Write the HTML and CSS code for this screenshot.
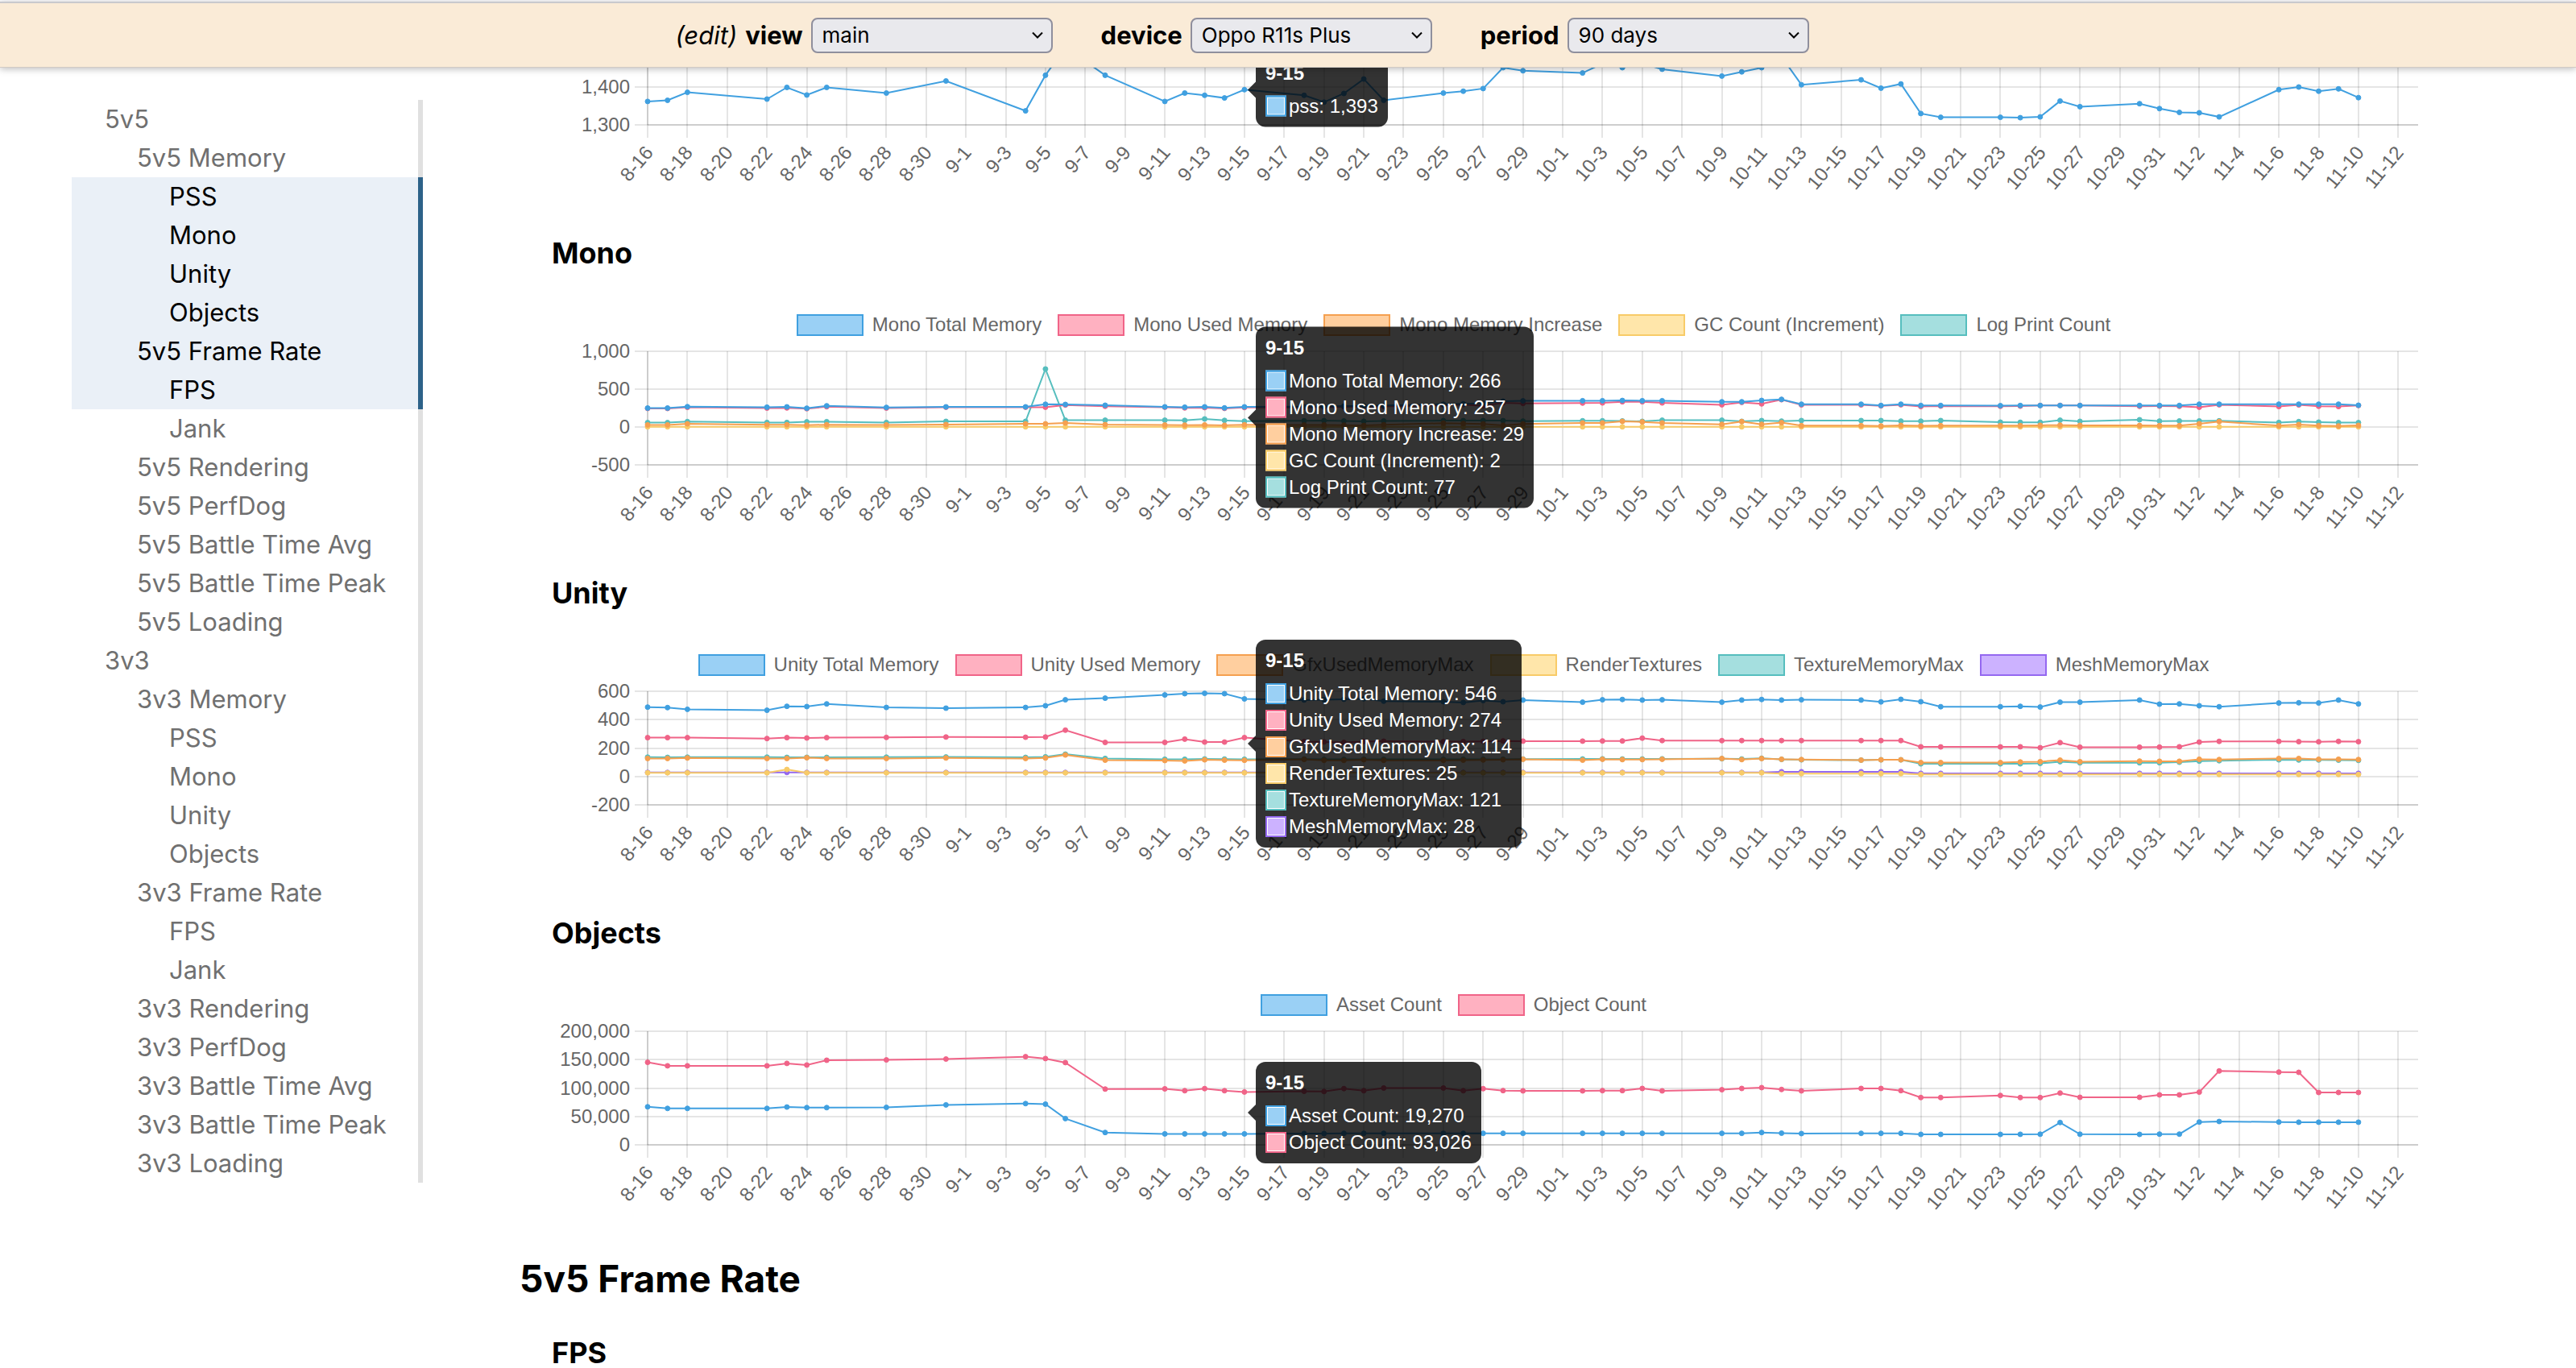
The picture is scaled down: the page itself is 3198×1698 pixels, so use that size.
FILE: index.html
```html
<!DOCTYPE html>
<html lang="en">
<head>
<meta charset="utf-8">
<title>Performance dashboard</title>
<link rel="stylesheet" href="styles.css">
</head>
<body>
<div class="page">
  <header class="toolbar">
    <div class="field">
      <a class="edit" href="#edit">(edit)</a>
      <label for="view">view</label>
      <span class="picker">
        <select id="view"><option>main</option></select>
        <svg class="chevron" viewBox="0 0 16 10" aria-hidden="true"><path d="M2 1.500l6 6 6-6"/></svg>
      </span>
    </div>
    <div class="field">
      <label for="device">device</label>
      <span class="picker">
        <select id="device"><option>Oppo R11s Plus</option></select>
        <svg class="chevron" viewBox="0 0 16 10" aria-hidden="true"><path d="M2 1.500l6 6 6-6"/></svg>
      </span>
    </div>
    <div class="field">
      <label for="period">period</label>
      <span class="picker">
        <select id="period"><option>90 days</option></select>
        <svg class="chevron" viewBox="0 0 16 10" aria-hidden="true"><path d="M2 1.500l6 6 6-6"/></svg>
      </span>
    </div>
  </header>
  <div class="body">
    <nav class="toc" aria-label="Contents">
      <a class="l1" href="#s5">5v5</a>
      <a class="l2" href="#s5-memory">5v5 Memory</a>
      <a class="l3 active" href="#pss">PSS</a>
      <a class="l3 active" href="#mono">Mono</a>
      <a class="l3 active" href="#unity">Unity</a>
      <a class="l3 active" href="#objects">Objects</a>
      <a class="l2 active" href="#frame-rate">5v5 Frame Rate</a>
      <a class="l3 active" href="#fps">FPS</a>
      <a class="l3" href="#s5-jank">Jank</a>
      <a class="l2" href="#s5-rendering">5v5 Rendering</a>
      <a class="l2" href="#s5-perfdog">5v5 PerfDog</a>
      <a class="l2" href="#s5-avg">5v5 Battle Time Avg</a>
      <a class="l2" href="#s5-peak">5v5 Battle Time Peak</a>
      <a class="l2" href="#s5-loading">5v5 Loading</a>
      <a class="l1" href="#s3">3v3</a>
      <a class="l2" href="#s3-memory">3v3 Memory</a>
      <a class="l3" href="#s3-pss">PSS</a>
      <a class="l3" href="#s3-mono">Mono</a>
      <a class="l3" href="#s3-unity">Unity</a>
      <a class="l3" href="#s3-objects">Objects</a>
      <a class="l2" href="#s3-frame-rate">3v3 Frame Rate</a>
      <a class="l3" href="#s3-fps">FPS</a>
      <a class="l3" href="#s3-jank">Jank</a>
      <a class="l2" href="#s3-rendering">3v3 Rendering</a>
      <a class="l2" href="#s3-perfdog">3v3 PerfDog</a>
      <a class="l2" href="#s3-avg">3v3 Battle Time Avg</a>
      <a class="l2" href="#s3-peak">3v3 Battle Time Peak</a>
      <a class="l2" href="#s3-loading">3v3 Loading</a>
    </nav>
    <main class="content" id="content">
      <h2 id="s5-memory">5v5 Memory</h2>
      <section id="pss"><h3>PSS</h3><div class="chart" data-chart="pss"></div></section>
      <section id="mono"><h3>Mono</h3><div class="chart" data-chart="mono"></div></section>
      <section id="unity"><h3>Unity</h3><div class="chart" data-chart="unity"></div></section>
      <section id="objects"><h3>Objects</h3><div class="chart" data-chart="objects"></div></section>
      <h2 id="frame-rate">5v5 Frame Rate</h2>
      <section id="fps"><h3>FPS</h3></section>
    </main>
  </div>
</div>
<script src="charts.js"></script>
</body>
</html>
```
FILE: styles.css
```css
* { box-sizing: border-box; }
body {
  margin: 0;
  background: #fff;
  color: #000;
  font-family: Inter, "Liberation Sans", sans-serif;
}
a { color: inherit; text-decoration: none; }
.page {
  display: flex;
  flex-direction: column;
  height: 100vh;
  border-top: 2px solid #f9f9fb;
}
.toolbar {
  position: relative;
  z-index: 2;
  flex: none;
  display: flex;
  justify-content: center;
  align-items: center;
  gap: 60px;
  height: 82px;
  padding-right: 114px;
  border-top: 2px solid #c9c9cd;
  border-bottom: 1px solid #d2cbc4;
  background: #faebd7;
  box-shadow: 0 2px 8px rgba(0, 0, 0, 0.25);
  font-size: 31px;
}
.field { display: flex; align-items: center; gap: 10px; }
.field label { font-weight: 700; }
.edit { font-style: italic; }
.picker { position: relative; display: flex; }
.picker select {
  appearance: none;
  width: 300px;
  height: 44px;
  padding: 0 12px;
  border: 2px solid #8f8f9d;
  border-radius: 8px;
  background: #e9e9ed;
  color: #000;
  font: 26px Inter, "Liberation Sans", sans-serif;
}
.chevron {
  position: absolute;
  right: 11px;
  top: 17px;
  width: 16px;
  height: 10px;
  fill: none;
  stroke: #000;
  stroke-width: 2;
  pointer-events: none;
}
.body { flex: 1; display: flex; min-height: 0; }
.toc {
  flex: none;
  width: 525px;
  padding: 40px 0 0 89px;
}
.toc a {
  display: block;
  border-right: 6px solid #e0e0e0;
  color: #707070;
  font-size: 31px;
  line-height: 48px;
}
.toc .l1 { padding-left: 41px; }
.toc .l2 { padding-left: 81px; }
.toc .l3 { padding-left: 121px; }
.toc .active {
  border-color: #2d6289;
  background: #eaf0f7;
  color: #000;
}
.content {
  flex: 1;
  min-width: 0;
  overflow-y: auto;
  scrollbar-width: none;
  padding: 0 196px 120px 120px;
}
h2 { margin: 0 0 41px; font-size: 46px; line-height: 58px; }
h3 { margin: 0; font-size: 36px; line-height: 44px; }
section { padding-left: 40px; }
.chart {
  position: relative;
  height: 378px;
  padding-top: 51px;
  font-family: "Liberation Sans", Arial, sans-serif;
  font-size: 24px;
}
.legend {
  display: flex;
  justify-content: center;
  gap: 20px;
  margin: 0 0 0 -78px;
  padding: 0;
  list-style: none;
  color: #666;
  line-height: 32px;
}
.legend li { display: flex; align-items: center; gap: 11px; }
.legend i {
  width: 83px;
  height: 27px;
  border-style: solid;
  border-width: 2px;
}
.plot { display: block; width: 100%; height: 250px; overflow: visible; }
.plot text { fill: #666; }
.grid { stroke: rgba(0, 0, 0, 0.1); stroke-width: 2; }
.series { fill: none; stroke-width: 2; }
.tooltip {
  position: absolute;
  transform: translateY(-50%);
  padding: 12px;
  border-radius: 12px;
  background: rgba(0, 0, 0, 0.8);
  color: #fff;
  white-space: nowrap;
}
.tooltip::before {
  content: "";
  position: absolute;
  left: -10px;
  top: 50%;
  margin-top: -10px;
  border: solid transparent;
  border-width: 10px 10px 10px 0;
  border-right-color: rgba(0, 0, 0, 0.8);
}
.tooltip strong { display: block; margin-bottom: 12px; line-height: 28px; }
.tooltip ul {
  display: flex;
  flex-direction: column;
  gap: 4px;
  margin: 0;
  padding: 0;
  list-style: none;
}
.tooltip li { display: flex; align-items: center; gap: 3px; line-height: 29px; }
.tooltip i {
  width: 26px;
  height: 26px;
  border-style: solid;
  border-width: 2px;
  box-shadow: inset 0 0 0 1px #fff;
}
.blue { border-color: #40a0e0; background: #9ad0f5; stroke: #40a0e0; }
.pink { border-color: #f06488; background: #ffb1c1; stroke: #f06488; }
.orange { border-color: #f5a050; background: #ffcf9f; stroke: #f5a050; }
.yellow { border-color: #f8cb68; background: #ffe6aa; stroke: #f8cb68; }
.teal { border-color: #56bebe; background: #a5dfdf; stroke: #56bebe; }
.purple { border-color: #9468f0; background: #ccb2ff; stroke: #9468f0; }
.dots.blue { fill: #40a0e0; }
.dots.pink { fill: #f06488; }
.dots.orange { fill: #f5a050; }
.dots.yellow { fill: #f8cb68; }
.dots.teal { fill: #56bebe; }
.dots.purple { fill: #9468f0; }
```
FILE: charts.js
```js
// Day offsets (from 8-16) on which a measurement exists.
const DAYS = [0,1,2,6,7,8,9,12,15,19,20,21,23,26,27,28,29,30,33,34,35,36,37,40,41,42,43,44,
  47,48,49,50,51,54,55,56,57,58,61,62,63,64,65,68,69,70,71,72,75,76,77,78,79,82,83,84,85,86];
const SPAN = 89;
const HOVER = 17;

const CHARTS = {
  pss: {
    min: 1300, max: 1600, step: 100,
    series: [
      ["pss", "blue", [1362,1365,1386,1368,1399,1379,1399,1384,1416,1337,1431,1505,1431,1362,1384,1378,1371,1393,1378,1360,1383,1421,1365,1384,1389,1396,1451,1443,1437,1462,1451,1462,1447,1429,1440,1451,1480,1406,1419,1397,1408,1330,1320,1320,1319,1321,1363,1348,1356,1343,1333,1332,1321,1393,1400,1389,1395,1372]]
    ]
  },
  mono: {
    min: -500, max: 1000, step: 500,
    series: [
      ["Mono Total Memory", "blue", [250,250,268,262,266,248,280,259,266,266,300,298,287,266,262,266,252,266,268,270,276,280,284,300,305,312,340,345,347,347,350,347,347,333,333,351,365,301,301,284,301,284,284,282,284,284,284,284,284,284,284,301,301,301,301,301,301,287]],
      ["Mono Used Memory", "pink", [245,245,260,250,252,242,268,250,262,262,262,290,273,262,252,256,246,257,258,262,266,270,272,288,296,280,318,312,316,318,333,333,318,294,326,305,361,291,291,280,294,270,277,273,276,284,284,284,273,276,273,262,294,270,291,273,270,284]],
      ["Mono Memory Increase", "orange", [28,28,42,30,30,24,30,28,32,42,42,53,32,26,24,28,22,29,26,28,24,20,30,50,45,40,22,40,53,53,74,67,53,35,71,35,57,18,18,14,22,16,18,18,18,22,24,22,20,18,18,43,71,18,32,18,14,21]],
      ["GC Count (Increment)", "yellow", DAYS.map(() => 2)],
      ["Log Print Count", "teal", [57,57,71,60,60,68,70,60,75,74,766,89,89,89,87,106,87,77,82,84,80,76,80,84,84,84,84,78,82,82,80,74,89,89,74,85,78,85,85,85,78,77,85,64,62,62,89,74,96,78,80,80,82,60,71,64,57,57]]
    ]
  },
  unity: {
    min: -200, max: 600, step: 200,
    series: [
      ["Unity Total Memory", "blue", [488,485,473,466,494,492,511,486,481,486,498,540,551,574,583,585,583,546,538,540,544,547,530,526,521,534,526,538,523,540,542,538,540,523,538,542,538,540,538,525,543,526,491,491,494,489,523,523,538,509,511,498,491,517,519,517,538,511]],
      ["Unity Used Memory", "pink", [273,273,273,267,273,271,273,275,278,276,278,326,240,240,263,242,242,274,245,243,240,246,248,245,246,247,250,249,249,250,250,270,253,252,253,253,253,253,253,253,253,209,208,208,209,202,238,206,206,207,209,242,247,247,245,244,247,245]],
      ["GfxUsedMemoryMax", "orange", [127,127,130,127,127,132,127,127,130,127,130,151,115,112,110,117,115,114,120,114,113,118,114,114,115,116,118,121,115,121,119,119,121,126,119,126,121,119,115,117,117,98,98,98,102,104,115,104,108,107,107,121,119,126,126,121,121,119]],
      ["RenderTextures", "yellow", DAYS.map(d => d === 7 ? 49 : d === 30 ? 25 : d < 57 ? 26 : d < 64 ? 20 : 14)],
      ["TextureMemoryMax", "teal", [136,134,136,136,134,135,134,136,137,134,138,157,127,121,121,123,122,121,122,120,120,121,120,120,121,121,121,122,123,124,123,123,124,125,123,128,120,117,115,117,117,89,89,89,89,92,104,96,96,97,100,108,111,117,116,116,115,113]],
      ["MeshMemoryMax", "purple", DAYS.map(d => d < 57 ? 28 : d < 64 ? 33 : 22)]
    ]
  },
  objects: {
    min: 0, max: 200000, step: 50000,
    series: [
      ["Asset Count", "blue", [67000,64150,64150,64150,66500,65570,65570,66000,70300,72600,71700,46200,21700,19300,19300,19270,19270,19270,20000,19800,20300,20300,20300,20300,20300,20300,20300,20300,20300,20300,20300,20300,20300,20300,20300,21750,20500,19860,20300,20300,20300,18440,18440,18440,18600,18700,39240,18700,18440,18900,18900,40200,41100,40200,39800,39800,39800,39800]],
      ["Object Count", "pink", [145300,139150,139150,139150,143400,140600,149000,149500,151000,155200,151900,144800,98100,98600,95300,99000,95300,93026,94300,93900,99000,95300,100000,100000,95300,98800,95500,95000,95000,95500,95500,99300,95000,97000,99300,100700,97400,95000,99300,99300,95500,83200,83200,87000,83200,83200,91250,83700,83700,88000,88000,92700,130000,128100,127700,92200,92200,92200]]
    ]
  }
};

const LEFT = 119;    // room for the value labels
const TOP = 17;      // first grid line inside the svg
const HEIGHT = 141;  // plot area
const TICK = 16;
const FLOOR = 294;   // lowest edge a tooltip may reach inside the chart

function dayLabel(offset) {
  const d = new Date(Date.UTC(2021, 7, 16 + offset));
  return (d.getUTCMonth() + 1) + "-" + d.getUTCDate();
}

function drawChart(el) {
  const c = CHARTS[el.dataset.chart];
  const width = el.clientWidth;
  const x = d => LEFT + d * (width - LEFT) / SPAN;
  const y = v => TOP + (c.max - v) * HEIGHT / (c.max - c.min);
  const line = (x1, y1, x2, y2) =>
    `<line class="grid" x1="${x1}" y1="${y1}" x2="${x2}" y2="${y2}"/>`;
  let svg = "";

  for (let v = c.min; v <= c.max; v += c.step) {
    const gy = Math.round(y(v));
    svg += line(LEFT - TICK, gy, width, gy);
    svg += `<text x="${LEFT - 22}" y="${gy + 8}" text-anchor="end">${v.toLocaleString("en-US")}</text>`;
  }
  for (let d = 0; d < SPAN; d += 2) {
    const gx = Math.round(x(d));
    svg += line(gx, TOP, gx, TOP + HEIGHT + TICK);
    svg += `<text transform="translate(${gx + 8} ${TOP + HEIGHT + 35}) rotate(-50)" text-anchor="end">${dayLabel(d)}</text>`;
  }
  svg += line(LEFT, TOP, LEFT, TOP + HEIGHT) + line(LEFT, TOP + HEIGHT, width, TOP + HEIGHT);

  for (const [, color, values] of [...c.series].reverse()) {
    const pts = values.map((v, i) => [x(DAYS[i]).toFixed(1), y(v).toFixed(1)]);
    svg += `<polyline class="series ${color}" points="${pts.map(p => p.join()).join(" ")}"/>`;
    svg += `<g class="dots ${color}">${pts.map(p => `<circle cx="${p[0]}" cy="${p[1]}" r="3"/>`).join("")}</g>`;
  }

  const legend = c.series.map(([name, color]) =>
    `<li><i class="${color}"></i>${name}</li>`).join("");
  const rows = c.series.map(([name, color, values]) =>
    `<li><i class="${color}"></i>${name}: ${values[HOVER].toLocaleString("en-US")}</li>`).join("");

  el.innerHTML =
    `<ul class="legend">${legend}</ul>` +
    `<svg class="plot" role="img" aria-label="${el.dataset.chart} chart">${svg}</svg>` +
    `<div class="tooltip"><strong>${dayLabel(DAYS[HOVER])}</strong><ul>${rows}</ul></div>`;

  const plotTop = el.querySelector(".plot").getBoundingClientRect().top - el.getBoundingClientRect().top;
  const mean = c.series.reduce((sum, s) => sum + y(s[2][HOVER]), 0) / c.series.length;
  const tip = el.querySelector(".tooltip");
  const center = Math.min(plotTop + mean, FLOOR - tip.offsetHeight / 2);
  tip.style.left = Math.round(x(DAYS[HOVER]) + 14) + "px";
  tip.style.top = Math.round(center) + "px";
}

function drawAll() {
  document.querySelectorAll(".chart").forEach(drawChart);
}

drawAll();
window.addEventListener("resize", drawAll);
document.getElementById("content").scrollTop = 313;
```
